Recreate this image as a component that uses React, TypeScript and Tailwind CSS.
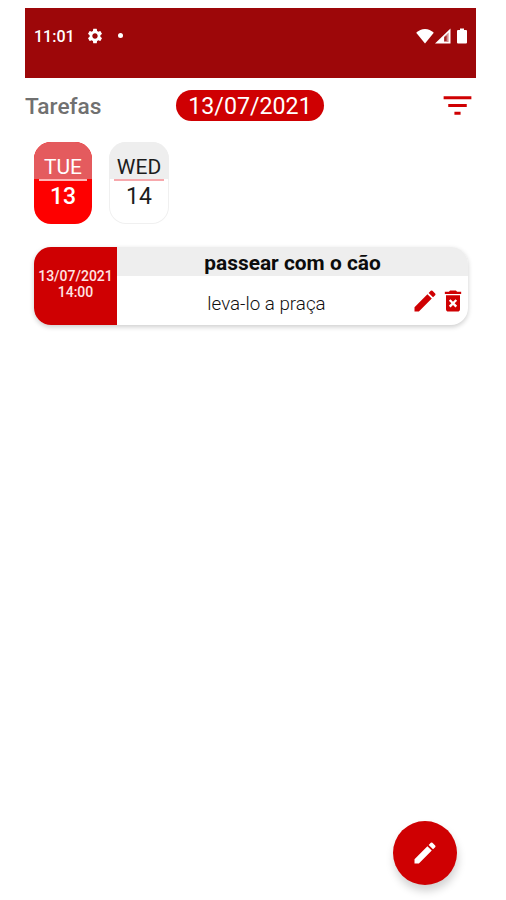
import React from 'react';
import { MdDeleteForever, MdEdit, MdFilterList, MdSettings } from 'react-icons/md';

interface Task {
  title: string;
  description: string;
  date: string;
  time: string;
}

interface DayCardProps {
  weekday: string;
  day: number;
  selected?: boolean;
}

const tasks: Task[] = [
  { title: 'passear com o cão', description: 'leva-lo a praça', date: '13/07/2021', time: '14:00' },
];

const StatusBar = () => (
  <div className="h-[70px] bg-[#9d0709] px-[9px] pt-[19px] text-white">
    <div className="flex h-[18px] items-center">
      <span className="w-[52px] pt-[2px] text-[16px] leading-[18px] font-medium">11:01</span>
      <MdSettings size={18} />
      <span className="ml-[14px] size-[5px] rounded-full bg-white" />
      <div className="ml-auto flex items-center">
        <svg width="18" height="16" viewBox="0 0 18 16" fill="currentColor">
          <path d="M9 15.5 0.2 4.8C2.7 2.3 5.7 1 9 1s6.3 1.3 8.8 3.8z" />
        </svg>
        <svg className="ml-px" width="16" height="16" viewBox="0 0 16 16">
          <path d="M0 15.5 15.5 0.5v15z" fill="currentColor" />
          <path d="M9 14V8.800L13.600 4.500V14z" fill="#9d0709" opacity=".45" />
          <path d="M9.200 13V9.300l2.400-1.800V13z" fill="#9d0709" opacity=".8" />
        </svg>
        <svg className="ml-[6px]" width="10" height="16" viewBox="0 0 10 16" fill="currentColor">
          <path d="M3 .5h4V2h2q1 0 1 1v11.500q0 1-1 1H1q-1 0-1-1V3q0-1 1-1h2z" />
        </svg>
      </div>
    </div>
  </div>
);

const DayCard = ({ weekday, day, selected }: DayCardProps) => (
  <div
    className={`flex h-[82px] flex-col overflow-hidden rounded-[17px] text-center text-[23px] ${
      selected ? 'w-[58px] bg-[#fe0000] text-white' : 'w-[60px] bg-white text-[#1c1c1c] ring-1 ring-[#f0f0f0] ring-inset'
    }`}
  >
    <div
      className={`h-[37px] shrink-0 pt-[12px] text-[21px] leading-[26px] ${selected ? 'bg-[#e45b5e]' : 'bg-[#eeeeee]'}`}
    >
      {weekday}
    </div>
    <div className={`mx-[5px] h-[2px] shrink-0 ${selected ? 'bg-[#ffb5b5]' : 'bg-[#f7a8ac]'}`} />
    <div className={`pt-[3px] leading-[26px] ${selected ? 'font-medium' : ''}`}>{day}</div>
  </div>
);

const TaskCard = ({ task }: { task: Task }) => (
  <div className="flex h-[78px] overflow-hidden rounded-[17px] bg-white shadow-[0_2px_5px_rgba(0,0,0,0.2)]">
    <div className="w-[83px] shrink-0 bg-[#cf0002] pt-[21px] text-center text-[14px] leading-[16px] font-medium text-[#ffe3e3]">
      <div>{task.date}</div>
      <div>{task.time}</div>
    </div>
    <div className="grid flex-1 grid-rows-[29px_49px]">
      <div className="bg-[#eeeeee] text-center text-[20.9px] leading-[32px] font-bold text-[#0c0c0c]">
        {task.title}
      </div>
      <div className="flex items-center">
        <span className="flex-1 pt-[6px] pl-[5px] text-center text-[18.8px] font-light text-[#111]">
          {task.description}
        </span>
        <div className="flex pt-px pr-px text-[#cf0002]">
          <MdEdit size={28} />
          <MdDeleteForever size={28} />
        </div>
      </div>
    </div>
  </div>
);

const App = () => {
  return (
    <div className="h-[900px] w-[506px] overflow-hidden bg-white pt-[7.5px] pr-[30.5px] pl-[25px] font-['Roboto',sans-serif]">
      <div className="flex h-full flex-col">
        <StatusBar />

        <header className="mt-[12.5px] grid h-[31px] grid-cols-[151px_148px_1fr] grid-rows-[31px]">
          <h1 className="text-[22.7px] leading-[33px] font-medium text-[#707070]">Tarefas</h1>
          <div className="rounded-full bg-[#cf0002] text-center text-[23.2px] leading-[33px] text-white">
            13/07/2021
          </div>
          <MdFilterList size={37} className="-mt-[3px] justify-self-end text-[#cf0002]" />
        </header>

        <div className="mt-[21px] ml-[9px] flex gap-[17px]">
          <DayCard weekday="TUE" day={13} selected />
          <DayCard weekday="WED" day={14} />
        </div>

        <main className="mt-[23.4px] mr-[7.5px] ml-[9px]">
          {tasks.map((task) => (
            <TaskCard key={task.title} task={task} />
          ))}
        </main>

        <button className="mt-auto mr-[18.5px] mb-[15px] flex size-[64px] shrink-0 items-center justify-center self-end rounded-full bg-[#cf0002] text-white shadow-[1px_6px_9px_rgba(0,0,0,0.18)]">
          <MdEdit size={28} />
        </button>
      </div>
    </div>
  );
};

export default App;
